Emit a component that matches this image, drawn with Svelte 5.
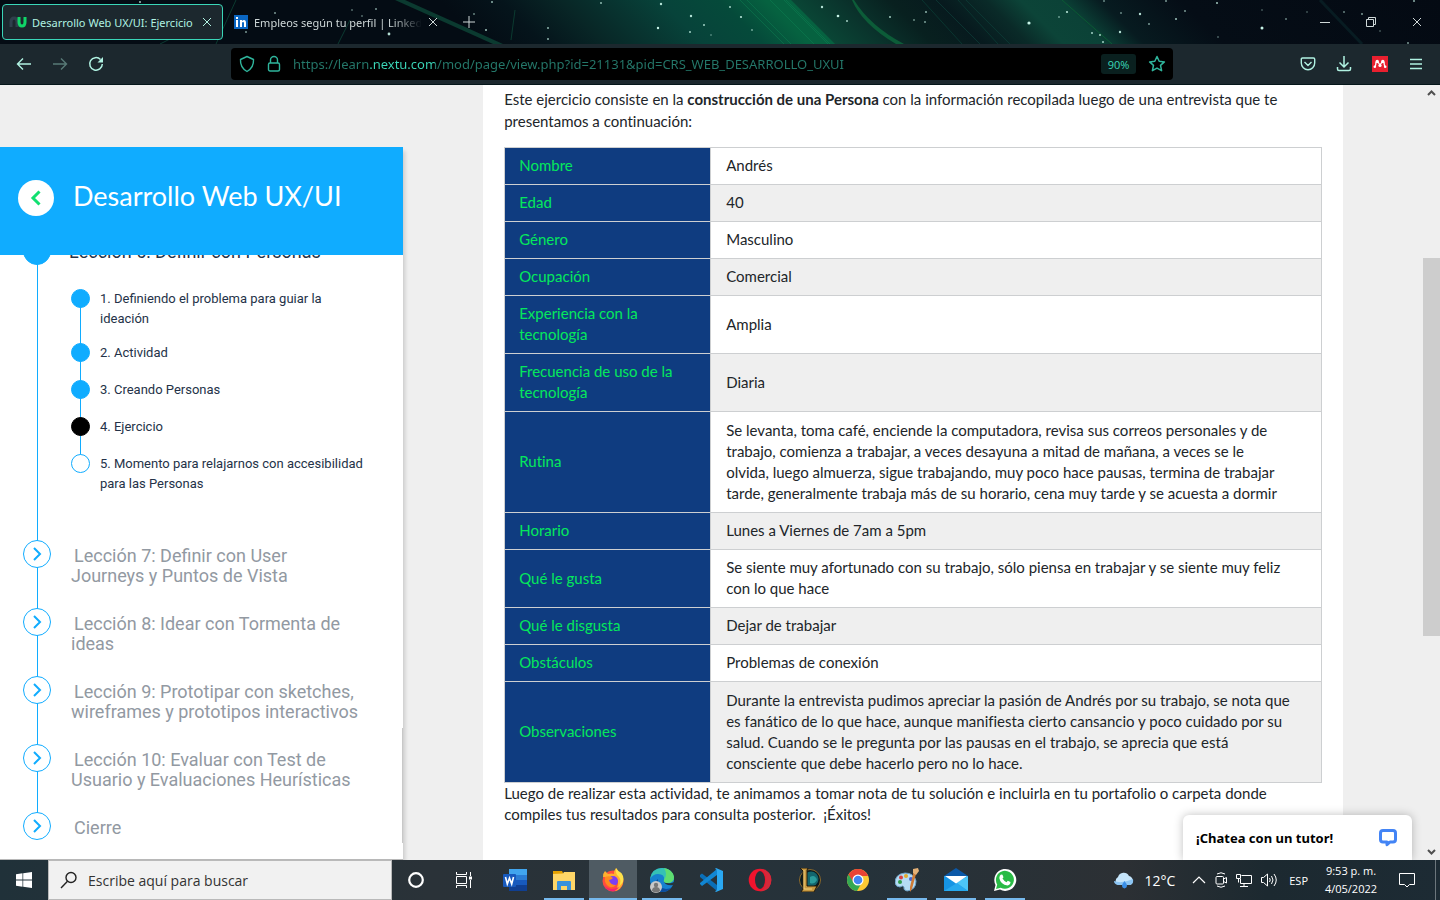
<script>
  const steps = [
    { text: '1. Definiendo el problema para guiar la\nideación', state: 'done' },
    { text: '2. Actividad', state: 'done' },
    { text: '3. Creando Personas', state: 'done' },
    { text: '4. Ejercicio', state: 'current' },
    { text: '5. Momento para relajarnos con accesibilidad\npara las Personas', state: 'todo' }
  ];

  const lessons = [
    'Lección 7: Definir con User\nJourneys y Puntos de Vista',
    'Lección 8: Idear con Tormenta de\nideas',
    'Lección 9: Prototipar con sketches,\nwireframes y prototipos interactivos',
    'Lección 10: Evaluar con Test de\nUsuario y Evaluaciones Heurísticas',
    'Cierre'
  ];

  const rows = [
    ['Nombre', 'Andrés'],
    ['Edad', '40'],
    ['Género', 'Masculino'],
    ['Ocupación', 'Comercial'],
    ['Experiencia con la\ntecnología', 'Amplia'],
    ['Frecuencia de uso de la\ntecnología', 'Diaria'],
    ['Rutina', 'Se levanta, toma café, enciende la computadora, revisa sus correos personales y de\ntrabajo, comienza a trabajar, a veces desayuna a mitad de mañana, a veces se le\nolvida, luego almuerza, sigue trabajando, muy poco hace pausas, termina de trabajar\ntarde, generalmente trabaja más de su horario, cena muy tarde y se acuesta a dormir'],
    ['Horario', 'Lunes a Viernes de 7am a 5pm'],
    ['Qué le gusta', 'Se siente muy afortunado con su trabajo, sólo piensa en trabajar y se siente muy feliz\ncon lo que hace'],
    ['Qué le disgusta', 'Dejar de trabajar'],
    ['Obstáculos', 'Problemas de conexión'],
    ['Observaciones', 'Durante la entrevista pudimos apreciar la pasión de Andrés por su trabajo, se nota que\nes fanático de lo que hace, aunque manifiesta cierto cansancio y poco cuidado por su\nsalud. Cuando se le pregunta por las pausas en el trabajo, se aprecia que está\nconsciente que debe hacerlo pero no lo hace.']
  ];

  // x, y, radius, opacity
  const stars = [
    [140, 2, 1, 0.8], [275, 13, 1, 0.6], [352, 10, 1, 0.4], [362, 16, 1, 0.4], [376, 9, 1, 0.6], [389, 34, 1.4, 0.9],
    [246, 32, 1, 0.6], [474, 14, 1, 0.5], [492, 2, 1, 0.7], [486, 30, 1, 0.8], [548, 28, 1, 0.7], [548, 39, 1, 0.7],
    [601, 3, 1, 0.7], [661, 4, 1.2, 0.9], [658, 28, 1.2, 1], [691, 16, 1.2, 0.9], [690, 32, 1, 0.8], [704, 25, 1, 0.8],
    [711, 35, 0.8, 0.6], [730, 7, 1, 0.8], [741, 17, 1.1, 0.9], [752, 30, 0.9, 0.6], [822, 7, 1.2, 0.9], [838, 16, 1.3, 1],
    [847, 21, 1, 0.8], [890, 17, 1, 0.8], [914, 20, 1, 0.5], [926, 12, 1, 0.7], [925, 22, 1, 0.6], [1029, 23, 1.6, 1],
    [1067, 12, 1.1, 0.9], [1059, 17, 1, 0.5], [1092, 33, 1, 0.8], [1100, 35, 1, 0.8], [1120, 32, 1.2, 0.9], [1121, 13, 1, 0.5],
    [1140, 14, 1.2, 0.9], [1149, 24, 1, 0.6], [1104, 1, 1, 0.5], [1103, 42, 1, 0.8], [1166, 1, 1, 0.6], [1176, 19, 1, 0.8],
    [1185, 11, 1, 0.6], [1217, 3, 1, 0.8], [1218, 37, 0.8, 0.6], [1262, 28, 1.5, 1], [1262, 10, 0.8, 0.5], [1286, 19, 1, 0.5],
    [1307, 12, 0.8, 0.5], [1362, 14, 1, 0.6], [1344, 12, 1, 0.5], [1414, 1, 1, 0.7], [1408, 43, 1, 0.6], [1380, 31, 0.8, 0.5]
  ];

  let url = $state('https://learn.nextu.com/mod/page/view.php?id=21131&pid=CRS_WEB_DESARROLLO_UXUI');
  let query = $state('');
</script>

{#snippet cross()}
  <svg width="10" height="10" viewBox="0 0 10 10" fill="none" stroke="currentColor"><path d="M1 1l8 8M9 1l-8 8" /></svg>
{/snippet}

<div class="screen">
  <header>
    <div class="tabs">
      <svg class="sky" viewBox="0 0 1440 44" preserveAspectRatio="xMidYMid slice" aria-hidden="true">
        <defs>
          <linearGradient id="aurora" x1="440" y1="0" x2="1440" y2="0" gradientUnits="userSpaceOnUse">
            <stop offset="0" stop-color="#040c14" />
            <stop offset=".06" stop-color="#05141b" />
            <stop offset=".12" stop-color="#082626" />
            <stop offset=".17" stop-color="#083430" />
            <stop offset=".22" stop-color="#07433a" />
            <stop offset=".28" stop-color="#054a3a" />
            <stop offset=".325" stop-color="#066240" />
            <stop offset=".35" stop-color="#066240" />
            <stop offset=".352" stop-color="#0a4535" />
            <stop offset=".4" stop-color="#0a332c" />
            <stop offset=".45" stop-color="#08201f" />
            <stop offset=".5" stop-color="#071a1e" />
            <stop offset=".545" stop-color="#0a2a28" />
            <stop offset=".58" stop-color="#0c4438" />
            <stop offset=".62" stop-color="#0b4237" />
            <stop offset=".66" stop-color="#071b20" />
            <stop offset=".74" stop-color="#050d16" />
            <stop offset="1" stop-color="#040a13" />
          </linearGradient>
        </defs>
        <rect width="1440" height="44" fill="#040c14" />
        <path transform="skewX(45)" d="M440 0h1000v44H396z" fill="url(#aurora)" />
        <path d="M405 0l98 44h-10L395 0z" fill="#0b3a30" />
        <path d="M740 0l44 44M747 0l44 44M770 0l44 44M784 0l44 44M786 0l44 44" stroke="#108a58" opacity=".4" fill="none" />
        <path d="M854 0q16 26 50 44h-8Q862 24 852 0z" fill="#0c5c38" />
        <path d="M1062 0l50 44" stroke="#0b5a34" />
        <path d="M922 0l40 44M936 0l44 44M958 0l40 44M966 0l44 44" stroke="#0c3f38" opacity=".7" fill="none" />
        <path d="M236 0l-20 44M350 20l-12 24M515 10l-4 30M160 44l16-8" stroke="#0b3a30" fill="none" />
        <path d="M1320 0l42 44" stroke="#081c22" stroke-width="3" />
        {#each stars as [x, y, r, o]}
          <circle cx={x} cy={y} {r} fill="#c8f5e8" opacity={o} />
        {/each}
      </svg>
      <button class="tab active">
        <svg width="18" height="12" viewBox="0 0 18 12" fill="none" stroke-width="3">
          <path d="M2 11V6q0-4 3-4t3 4v5" stroke="#2f3f4c" />
          <path d="M10 1v5q0 4 3 4t3-4V1" stroke="#10d668" />
        </svg>
        <span class="title">Desarrollo Web UX/UI: Ejercicio</span>
        {@render cross()}
      </button>
      <button class="tab">
        <svg width="14" height="14" viewBox="0 0 14 14">
          <rect width="14" height="14" fill="#0a66c2" />
          <path d="M2 5h2v7H2zM2 2h2v2H2zM6 5h2v1q1-1 2-1 2 0 2 3v4h-2V8q0-1-1-1T8 8v4H6z" fill="#fff" />
        </svg>
        <span class="title fade">Empleos según tu perfil | Linked</span>
        {@render cross()}
      </button>
      <button class="plain plus" aria-label="Nueva pestaña">
        <svg width="12" height="12" viewBox="0 0 12 12" stroke="currentColor"><path d="M6 0v12M0 6h12" /></svg>
      </button>
      <div class="window">
        <button class="plain" aria-label="Minimizar"><svg width="12" height="12" viewBox="0 0 12 12" stroke="currentColor"><path d="M1 6.500h10" /></svg></button>
        <button class="plain" aria-label="Restaurar"><svg width="12" height="12" viewBox="0 0 12 12" fill="none" stroke="currentColor"><path d="M1.500 3.500h7v7h-7zM3.500 3.500v-2h7v7h-2" /></svg></button>
        <button class="plain" aria-label="Cerrar">{@render cross()}</button>
      </div>
    </div>

    <div class="toolbar">
      <div class="nav">
        <button class="plain" aria-label="Atrás"><svg width="16" height="16" viewBox="0 0 16 16" fill="none" stroke="currentColor" stroke-width="1.400"><path d="M15 8H1.500M7 2.500L1.500 8 7 13.500" /></svg></button>
        <button class="plain dim" aria-label="Adelante"><svg width="16" height="16" viewBox="0 0 16 16" fill="none" stroke="currentColor" stroke-width="1.400"><path d="M1 8h13.500M9 2.500L14.500 8 9 13.500" /></svg></button>
        <button class="plain" aria-label="Recargar"><svg width="16" height="16" viewBox="0 0 16 16" fill="none" stroke="currentColor" stroke-width="1.500"><path d="M12.500 3.500A6.300 6.300 0 1 0 14.300 8" /><path d="M15 1v5.500H9.500z" fill="currentColor" stroke="none" /></svg></button>
      </div>
      <div class="address">
        <svg width="16" height="18" viewBox="0 0 16 18" fill="none" stroke="currentColor" stroke-width="1.400"><path d="M8 1.500l6.500 3q.5 8-6.500 12Q1 12.500 1.500 4.500z" stroke-linejoin="round" /></svg>
        <svg width="14" height="18" viewBox="0 0 14 18" fill="none" stroke="currentColor" stroke-width="1.400"><rect x="1.500" y="8" width="11" height="8" rx="1.500" /><path d="M3.500 8V5a3.500 3.500 0 0 1 7 0v3" /></svg>
        <input class="url" type="text" aria-label="Dirección" spellcheck="false" bind:value={url} />
        <button class="zoom">90%</button>
        <button class="plain star" aria-label="Marcador"><svg width="18" height="18" viewBox="0 0 18 18" fill="none" stroke="currentColor" stroke-width="1.500" stroke-linejoin="round"><path d="M9 1.500l2.200 4.800 5.200.6-3.900 3.500 1.100 5.300L9 13.100l-4.600 2.600 1.100-5.300L1.600 6.900l5.200-.6z" /></svg></button>
      </div>
      <div class="tools">
        <button class="plain" aria-label="Pocket"><svg width="16" height="16" viewBox="0 0 16 16" fill="none" stroke="currentColor" stroke-width="1.400"><path d="M2.500 2h11q1.200 0 1.200 1.200V7a6.700 6.700 0 0 1-13.400 0V3.200Q1.300 2 2.500 2zM4.500 6L8 9.500 11.500 6" stroke-linejoin="round" /></svg></button>
        <button class="plain" aria-label="Descargas"><svg width="16" height="16" viewBox="0 0 16 16" fill="none" stroke="currentColor" stroke-width="1.500"><path d="M8 0v11M3.500 6.500L8 11l4.500-4.500M1.500 11v2q0 1.500 1.500 1.500h10q1.500 0 1.500-1.500v-2" /></svg></button>
        <button class="plain" aria-label="Mendeley"><svg width="16" height="16" viewBox="0 0 16 16"><rect width="16" height="16" fill="#e9202f" /><g fill="#fff"><circle cx="5.200" cy="5.500" r="1.700" /><circle cx="10.800" cy="5.500" r="1.700" /><circle cx="2.800" cy="10.800" r="1.300" /><circle cx="13.200" cy="10.800" r="1.300" /><circle cx="8" cy="9.500" r="1.600" /></g><path d="M2.800 10.800Q4 9 4 6M13.200 10.800Q12 9 12 6M6 6l2 3 2-3" stroke="#fff" stroke-width="1.300" fill="none" /></svg></button>
        <button class="plain" aria-label="Menú"><svg width="12" height="12" viewBox="0 0 12 12" stroke="currentColor"><path d="M0 1.500h12M0 6h12M0 10.500h12" stroke-width="1.300" /></svg></button>
      </div>
    </div>
  </header>

  <div class="page">
    <aside>
      <div class="course">
        <button class="back" aria-label="Volver"><svg width="12" height="18" viewBox="0 0 12 18" fill="none" stroke="#12e070" stroke-width="3"><path d="M9.500 2.500L3 9l6.500 6.500" /></svg></button>
        <h1>Desarrollo Web UX/UI</h1>
      </div>
      <div class="outline">
        <ul class="lessons">
          <li class="open">
            <span class="node"></span>
            <h2>Lección 6: Definir con Personas</h2>
            <ul class="steps">
              {#each steps as step}
                <li><span class="dot {step.state}"></span><a href="#paso">{step.text}</a></li>
              {/each}
            </ul>
          </li>
          {#each lessons as lesson}
            <li>
              <span class="node"><svg width="10" height="14" viewBox="0 0 10 14" fill="none" stroke="#10acff" stroke-width="2"><path d="M2 1l6 6-6 6" /></svg></span>
              <a class="lesson" href="#leccion">{lesson}</a>
            </li>
          {/each}
        </ul>
        <span class="rail"></span>
      </div>
    </aside>

    <main>
      <p class="intro">Este ejercicio consiste en la <b>construcción de una Persona</b> con la información recopilada luego de una entrevista que te<br />presentamos a continuación:</p>
      <table>
        <tbody>
          {#each rows as [name, value]}
            <tr class:long={value.length > 200}>
              <th scope="row">{name}</th>
              <td>{value}</td>
            </tr>
          {/each}
        </tbody>
      </table>
      <p>Luego de realizar esta actividad, te animamos a tomar nota de tu solución e incluirla en tu portafolio o carpeta donde<br />compiles tus resultados para consulta posterior.&nbsp; ¡Éxitos!</p>
    </main>

    <div class="scrollbar">
      <svg width="9" height="6" viewBox="0 0 9 6" fill="none" stroke="#505050" stroke-width="2"><path d="M1 5l3.500-3.500L8 5" /></svg>
      <div class="track"><div class="thumb"></div></div>
      <svg width="9" height="6" viewBox="0 0 9 6" fill="none" stroke="#505050" stroke-width="2"><path d="M1 1l3.500 3.500L8 1" /></svg>
    </div>

    <button class="chat">
      ¡Chatea con un tutor!
      <svg width="20" height="20" viewBox="0 0 20 20" fill="none" stroke="#4384f5" stroke-width="3" stroke-linejoin="round"><path d="M5 2.500h10q2.500 0 2.500 2.500v6.500q0 2.500-2.500 2.500h-3l-3 2.700V14H5q-2.500 0-2.500-2.500V5Q2.500 2.500 5 2.500z" /></svg>
    </button>
  </div>

  <footer>
    <button class="plain start" aria-label="Inicio"><svg width="16" height="16" viewBox="0 0 16 16" fill="#fff"><path d="M0 2.200l6.500-.9v6.300H0zM7.200 1.200L16 0v7.600H7.200zM0 8.400h6.500v6.300L0 13.800zM7.200 8.400H16V16l-8.800-1.200z" /></svg></button>
    <label class="search">
      <svg width="18" height="18" viewBox="0 0 18 18" fill="none" stroke="#222" stroke-width="1.400"><circle cx="11" cy="6.500" r="5" /><path d="M7.500 10.200L1 17" /></svg>
      <input type="text" aria-label="Buscar" placeholder="Escribe aquí para buscar" bind:value={query} />
    </label>
    <button class="plain sys" aria-label="Cortana"><svg width="16" height="16" viewBox="0 0 16 16" fill="none"><circle cx="8" cy="8" r="6.800" stroke="#fff" stroke-width="2.200" /></svg></button>
    <button class="plain sys" aria-label="Vista de tareas"><svg width="16" height="16" viewBox="0 0 16 16" fill="none" stroke="#fff"><path d="M.5 0v2.500h10V0M.5 16v-2.500h10V16M.5 4.500h10v7H.5zM14.500 0v4M14.500 8v8" /><path d="M13 4.500h3v3h-3z" fill="#fff" stroke="none" /></svg></button>

    <div class="apps">
      <button class="app" aria-label="Word"><svg width="24" height="24" viewBox="0 0 24 24"><path d="M6 1h18v6H6z" fill="#41a5ee" /><path d="M6 7h18v5H6z" fill="#2b7cd3" /><path d="M6 12h18v5H6z" fill="#185abd" /><path d="M6 17h18v6H6z" fill="#103f91" /><rect y="6" width="13" height="13" rx="1" fill="#185abd" /><path d="M2.500 9l1.800 7 2.200-6 2.200 6 1.800-7" fill="none" stroke="#fff" stroke-width="1.600" /></svg></button>
      <button class="app run" aria-label="Explorador"><svg width="24" height="24" viewBox="0 0 24 24"><path d="M1 3h9l1 2v3H1z" fill="#e6a100" /><path d="M1 6l10-.5L12 4h11v18H1z" fill="#ffd667" /><path d="M5 22v-8q0-1 1-1h12q1 0 1 1v8h-4v-4H9v4z" fill="#3a92dd" /></svg></button>
      <button class="app run focus" aria-label="Firefox"><svg width="24" height="24" viewBox="0 0 24 24"><circle cx="12" cy="13" r="10.500" fill="#ff4d3d" /><path d="M2 9q0-4 2-6l3 3q4-1 6 0 0-4 2-6 2 4 5 6 3 5 2 9-2 7-9 8 4-3 4-8 0-5-6-6z" fill="#ffb02e" /><path d="M15 0q-1 6 3 9 3 4 0 9 6-4 4-10-1-3-3-4-2-1-4-4z" fill="#ffe14a" /><circle cx="12" cy="13" r="5" fill="#7b3ff2" /><path d="M4 9q5-2 8 1-2 2-4 2 1 5 7 5-4 4-8 1-4-3-3-9z" fill="#ff8a1f" /><path d="M3 17q6 7 15 2-3 5-8 4-5-1-7-6z" fill="#f5246d" /></svg></button>
      <button class="app run" aria-label="Edge"><svg width="26" height="26" viewBox="0 0 26 26"><circle cx="13" cy="13" r="12" fill="#1681cf" /><path d="M1 12Q3 1 13 1q10 0 12 9 0 6-7 6-4 0-3-3 1-6-6-6-5 0-8 5z" fill="#35c1b5" /><path d="M15 1q9 2 10 9 0 6-7 6-4 0-3-3 4-6 0-12z" fill="#5fdd70" /><path d="M9 12q-1 9 8 10 4 0 6-2-4 5-10 5-7 0-7-7 0-4 3-6z" fill="#0c4c9e" /><path d="M15 14q0 5 10 4v-3q-3 2-7 1-3 0-3-2z" fill="#26343b" /><circle cx="7" cy="20" r="6" fill="#c9c9c9" /><circle cx="7" cy="18" r="2.200" fill="#777" /><path d="M3 24q0-4 4-4t4 4q-4 3-8 0z" fill="#777" /></svg></button>
      <button class="app" aria-label="Visual Studio Code"><svg width="24" height="24" viewBox="0 0 24 24"><path d="M1 7l2-1.500L18 17v6L1 9z" fill="#0a6fb8" /><path d="M1 16l2 2L18 7V1L1 15z" fill="#1186d3" /><path d="M17 0l7 3v18l-7 3-1-1q2 0 2-2V3q0-2-2-2z" fill="#2aa8f2" /></svg></button>
      <button class="app" aria-label="Opera"><svg width="24" height="24" viewBox="0 0 24 24"><circle cx="12" cy="12" r="11.300" fill="#f0142d" /><path d="M12 1q11 1 11.300 11Q23 23 12 23.300q6-2.300 6-11.300T12 1z" fill="#d4293a" /><ellipse cx="12" cy="12" rx="5" ry="9" fill="#25333a" /></svg></button>
      <button class="app" aria-label="League of Legends"><svg width="24" height="24" viewBox="0 0 24 24"><circle cx="13" cy="12" r="10.500" fill="#0a1a20" stroke="#8c6a2c" /><circle cx="14" cy="11" r="7.500" fill="#12656d" /><path d="M13 9q5-3 7 3-3 5-7 3z" fill="#2a9c9c" /><path d="M3 0h8l-1 2v16h10l-3 6H4l2-3V3z" fill="#c89a42" stroke="#241a0b" /><path d="M7 2v19h8" fill="none" stroke="#f1cf7a" /></svg></button>
      <button class="app" aria-label="Chrome"><svg width="24" height="24" viewBox="0 0 24 24"><circle cx="12" cy="12" r="11" fill="#fcc934" /><path d="M2.500 6.500a11 11 0 0 1 19 0L22 8H12l-5 7z" fill="#ea4335" /><path d="M2.500 6.500L8 15l7 1-4 7A11 11 0 0 1 2.500 6.500z" fill="#34a853" /><circle cx="12" cy="12" r="5.500" fill="#fff" /><circle cx="12" cy="12" r="4.300" fill="#4285f4" /></svg></button>
      <button class="app run" aria-label="Paint"><svg width="24" height="24" viewBox="0 0 24 24"><path d="M10 5q9 0 11 8 0 9-9 10-4-1-3-4-1-2-4 0-4 0-5-4 0-9 10-10z" fill="#b5dcf3" stroke="#6fa3c8" /><circle cx="5" cy="14" r="2" fill="#2f9b4b" /><circle cx="6" cy="9.500" r="2" fill="#d94040" /><circle cx="11" cy="8" r="2" fill="#e2a92d" /><circle cx="16" cy="11" r="2" fill="#4a62d0" /><path d="M22 2l-5 19-2 3V19l4-17z" fill="#cf7b35" /><path d="M18 1l5-1 1 3-3 4-3-2z" fill="#e3b076" /></svg></button>
      <button class="app run" aria-label="Correo"><svg width="24" height="24" viewBox="0 0 24 24"><path d="M0 8l12-8 12 8v3H0z" fill="#0b58a7" /><path d="M0 8h24v15H0z" fill="#1694e4" /><path d="M24 8v15L12 15z" fill="#4cc6f7" /><path d="M0 23h24L13 15z" fill="#27a9ee" /><path d="M1 8h22l-11 7.500z" fill="#fff" /></svg></button>
      <button class="app run" aria-label="WhatsApp"><svg width="24" height="24" viewBox="0 0 24 24"><path d="M1 23l1.500-6A11 11 0 1 1 7 21.600z" fill="#fff" /><path d="M3 21l1.200-4.500a9 9 0 1 1 3.500 3.300z" fill="#2abb46" /><path d="M8 6.500l1.500.2 1 2.600-1 1.300q1.500 2.600 4 3.600l1.300-1.400 2.700 1.300q0 3-3 3.300-7-1-8.200-7.500Q6.500 7.500 8 6.500z" fill="#fff" /></svg></button>
    </div>

    <div class="tray">
      <button class="plain weather">
        <svg width="22" height="18" viewBox="0 0 22 18"><path d="M5 14a4.500 4.500 0 0 1 0-8 6 6 0 0 1 11-1 4.800 4.800 0 0 1 1 9z" fill="#c5e5fb" /><path d="M5 14q-4-1-4-4 8 3 19-2 1 5-3 6z" fill="#8cc5f3" /><path d="M11.500 10q5 6 0 7.500Q6.500 16 11.500 10z" fill="#3a8ee6" /></svg>
        12°C
      </button>
      <button class="plain" aria-label="Iconos ocultos"><svg width="14" height="16" viewBox="0 0 14 16" fill="none" stroke="#fff" stroke-width="1.200"><path d="M1 11l6-6 6 6" /></svg></button>
      <button class="plain" aria-label="Cámara"><svg width="12" height="16" viewBox="0 0 12 16" fill="none" stroke="#fff"><rect x="1" y="4.500" width="7.500" height="7.500" rx="1" /><path d="M8.500 7l3-1.500V11l-3-1.500M2 2q4-2.500 8 0M2 14q4 2.500 8 0" /></svg></button>
      <button class="plain" aria-label="Red"><svg width="16" height="16" viewBox="0 0 16 16" fill="none" stroke="#fff"><path d="M5.500 3.500h10v8h-11V7M4 14.500h8M8 11.500v3M.5 2.500h4v4h-4zM2.500 6.500v4" /></svg></button>
      <button class="plain" aria-label="Volumen"><svg width="17" height="16" viewBox="0 0 17 16" fill="none" stroke="#fff"><path d="M.5 5.500h2l4-3.500v12l-4-3.500h-2zM8.500 6q1.500 2 0 4M10.500 4q3 4 0 8M13 2q4.500 6 0 12" /></svg></button>
      <button class="plain lang">ESP</button>
      <button class="plain clock">9:53 p. m.<br />4/05/2022</button>
      <button class="plain note" aria-label="Notificaciones"><svg width="16" height="16" viewBox="0 0 16 16" fill="none" stroke="#fff"><path d="M.5 1.500h15v11h-5L8 15l-2.500-2.500h-5z" /></svg></button>
    </div>
  </footer>
</div>

<style>
  :global(body) { margin: 0; }
  * { box-sizing: border-box; }
  button, input { font: inherit; }
  svg { display: block; flex: none; }
  h1, h2, p, ul { margin: 0; padding: 0; font-weight: 400; }
  ul { list-style: none; }
  a { color: inherit; text-decoration: none; }

  .screen {
    display: grid;
    grid-template-rows: auto minmax(0, 1fr) auto;
    height: 100vh;
    overflow: hidden;
    font-family: "Open Sans", "Noto Sans", sans-serif;
    font-size: 12px;
  }
  .plain {
    display: flex;
    align-items: center;
    justify-content: center;
    padding: 0;
    border: 0;
    background: none;
    color: inherit;
  }

  header { color: #b0f2e2; border-bottom: 1px solid #05161a; }
  .tabs {
    position: relative;
    display: flex;
    align-items: center;
    height: 44px;
    padding-left: 2px;
    overflow: hidden;
  }
  .sky { position: absolute; inset: 0; width: 100%; height: 100%; }
  .tab {
    position: relative;
    display: flex;
    align-items: center;
    gap: 6px;
    width: 221px;
    height: 36px;
    margin-right: 4px;
    padding: 0 10px 0 6px;
    border: 1px solid transparent;
    border-radius: 4px;
    background: none;
    color: #cfd8d8;
    text-align: left;
  }
  .tab.active { background: #1c282e; border-color: #3ad6b8; color: #b0f2e2; gap: 5px; }
  .title { flex: 1; white-space: nowrap; font-family: "Noto Sans", sans-serif; font-size: 11px; }
  .fade { mask-image: linear-gradient(90deg, #000 82%, transparent); }
  .plus { position: relative; width: 34px; height: 32px; color: #cfd8d8; }
  .window { position: relative; display: flex; margin-left: auto; color: #cfd8d8; }
  .window .plain { width: 46px; height: 32px; }

  .toolbar { display: flex; align-items: center; height: 40px; background: #1c282e; }
  .nav { display: flex; padding-left: 6px; }
  .nav .plain { width: 36px; height: 32px; }
  .dim { opacity: 0.4; }
  .address {
    display: flex;
    align-items: center;
    flex: 1;
    gap: 12px;
    min-width: 0;
    height: 32px;
    margin-left: 117px;
    margin-right: 117px;
    padding: 0 7px 0 8px;
    border-radius: 4px;
    background: #000;
    color: #2fb59c;
  }
  .url {
    flex: 1;
    min-width: 0;
    height: 24px;
    padding: 0;
    border: 0;
    outline: 0;
    font-family: "Noto Sans", sans-serif;
    font-size: 13px;
    color: transparent;
    background: linear-gradient(90deg, #24786a 77px, #3ad6b8 77px, #3ad6b8 142px, #24786a 142px);
    background-clip: text;
    -webkit-background-clip: text;
  }
  .zoom { width: 35px; height: 20px; padding: 0; border: 0; border-radius: 3px; background: #0a201f; color: #3ad6b8; font-size: 11px; }
  .tools { display: flex; padding-right: 6px; }
  .tools .plain { width: 36px; height: 32px; }

  .page { position: relative; display: flex; background: #efefef; overflow: hidden; }
  aside {
    display: flex;
    flex-direction: column;
    width: 28%;
    margin-top: 62px;
    background: #fff;
    border-bottom: 1px solid #b8b8b8;
    box-shadow: 2px 4px 4px rgba(0, 0, 0, 0.15);
  }
  .course {
    position: relative;
    z-index: 1;
    display: flex;
    align-items: center;
    gap: 19px;
    height: 108px;
    flex: none;
    padding: 0 18px 6px;
    background: #10acff;
    color: #fff;
  }
  .back { display: grid; place-items: center; width: 36px; height: 36px; padding: 0; border: 0; border-radius: 50%; background: #fff; }
  h1 { padding-bottom: 4px; font-family: Lato, sans-serif; font-size: 27px; line-height: 36px; white-space: nowrap; }
  .outline { position: relative; flex: 1; min-height: 0; overflow: hidden; font-family: Roboto, sans-serif; }
  .lessons { margin-top: -18px; }
  .lessons > li { position: relative; padding: 6px 20px 22px 71px; }
  .lessons > li:not(:last-child)::before {
    content: "";
    position: absolute;
    top: 14px;
    bottom: -14px;
    left: 37px;
    width: 1px;
    background: #10acff;
  }
  .node {
    position: absolute;
    top: 0;
    left: 23px;
    display: grid;
    place-items: center;
    width: 28px;
    height: 28px;
    border: 1px solid #10acff;
    border-radius: 50%;
    background: #fff;
  }
  .open .node { background: #10acff; }
  .lesson { display: block; color: #9299a2; font-size: 18px; line-height: 20px; text-indent: 3px; white-space: pre; }
  .lessons > .open { padding-bottom: 46px; padding-top: 5px; }
  h2 { margin-left: -2px; color: #243248; font-size: 18px; line-height: 20px; white-space: nowrap; }
  .steps { margin-top: 27px; color: #243248; font-size: 13px; line-height: 20px; }
  .steps li { position: relative; display: flex; gap: 10px; padding-bottom: 17px; }
  .steps li:first-child { padding-bottom: 14px; }
  .steps li:last-child { padding-bottom: 0; }
  .steps li:not(:last-child)::before {
    content: "";
    position: absolute;
    top: 10px;
    bottom: -10px;
    left: 9px;
    width: 1px;
    background: #10acff;
  }
  .steps a { white-space: pre; }
  .dot { position: relative; flex: none; width: 19px; height: 19px; border: 1px solid #10acff; border-radius: 50%; background: #10acff; }
  .current { background: #000; border-color: #000; }
  .todo { background: #fff; }
  .rail { position: absolute; right: 0; bottom: 16px; width: 1px; height: 115px; background: #c8c8c8; }

  main {
    flex: 1;
    min-width: 0;
    margin: 0 80px;
    padding: 3px 21px 0;
    background: #fff;
    color: #212529;
    font-family: Lato, sans-serif;
    font-size: 15px;
    font-variant-ligatures: none;
    line-height: 22px;
  }
  main p { white-space: nowrap; }
  .intro { margin-bottom: 15px; }
  table { width: 100%; border-collapse: collapse; line-height: 21px; }
  th, td { border: 1px solid #cdcfd1; padding: 7px 14px 8px; font-weight: 400; text-align: left; white-space: pre-line; }
  th { width: 206px; background: #0f3c80; color: #05e85c; }
  td { padding-left: 15px; padding-right: 10px; }
  tr:nth-child(even) td { background: #efefef; }
  .long td { padding-top: 8px; }
  table + p { line-height: 21px; }

  .scrollbar { display: flex; flex-direction: column; align-items: center; width: 17px; padding: 5px 0; }
  .track { flex: 1; width: 100%; padding-top: 162px; }
  .thumb { height: 64%; background: #cdcdcd; }

  .chat {
    position: absolute;
    right: 28px;
    bottom: 0;
    display: flex;
    align-items: center;
    justify-content: space-between;
    width: 229px;
    height: 45px;
    padding: 0 14px 0 13px;
    border: 0;
    border-radius: 6px 6px 0 0;
    background: #fff;
    box-shadow: 0 0 10px rgba(0, 0, 0, 0.25);
    color: #000;
    font-family: "Noto Sans", sans-serif;
    font-size: 13px;
    font-weight: 700;
    white-space: nowrap;
  }

  footer {
    display: flex;
    height: 40px;
    background: linear-gradient(90deg, #203139, #2a3238 30%, #25323a 60%, #2c3034 78%, #1c2930 88%, #1d2b34);
    color: #fff;
  }
  .start, .sys { width: 48px; height: 40px; }
  .search {
    display: flex;
    align-items: center;
    gap: 10px;
    width: 344px;
    padding: 0 11px;
    border: 1px solid #b9b9b9;
    background: #f1f1f1;
  }
  .search input { flex: 1; min-width: 0; padding: 0; border: 0; outline: 0; background: none; font-size: 14px; }
  .search input::placeholder { color: #333; opacity: 1; }
  .apps { display: flex; gap: 1px; margin-left: 3px; }
  .app { position: relative; display: grid; place-items: center; width: 48px; height: 40px; padding: 0; border: 0; background: none; }
  .run::after { content: ""; position: absolute; left: 4px; right: 4px; bottom: 0; height: 2px; background: #76b9ed; }
  .focus { background: #4f5b63; }
  .focus::after { left: 0; right: 0; }
  .tray {
    display: flex;
    align-items: center;
    gap: 9px;
    margin-left: auto;
    margin-right: 4px;
    padding-right: 20px;
    border-right: 1px solid #6c767c;
    white-space: nowrap;
  }
  .weather { gap: 9px; margin-right: 8px; font-size: 14px; }
  .clock { width: 62px; line-height: 18px; text-align: center; }
  .lang, .clock { font-size: 11px; }
  .lang { margin-left: 2px; margin-right: 3px; }
  .note { margin-left: 8px; }
</style>
